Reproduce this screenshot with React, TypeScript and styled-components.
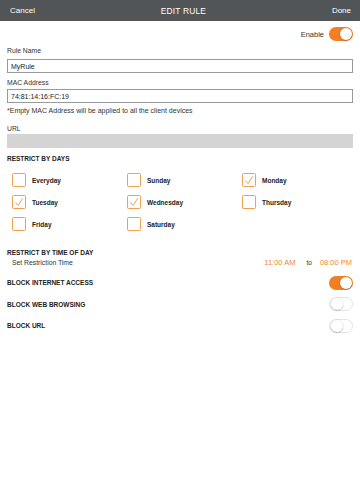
import React from 'react';
import styled, { createGlobalStyle } from 'styled-components';

const GlobalStyle = createGlobalStyle`
  body {
    margin: 0;
    background: #fff;
    font-family: "Liberation Sans", Arial, sans-serif;
    color: #222;
  }
`;

const Page = styled.div`
  width: 360px;
  height: 480px;
  background: #fff;
`;

const NavBar = styled.div`
  height: 21px;
  background: #525557;
  color: #fff;
  display: flex;
  align-items: center;
  justify-content: space-between;
  padding: 0 9px 0 10px;
  font-size: 8px;
`;

const NavTitle = styled.div`
  font-size: 8.4px;
  letter-spacing: 0.2px;
`;

const Body = styled.div`
  padding: 0 7px 0 7px;
`;

const EnableRow = styled.div`
  display: flex;
  justify-content: flex-end;
  align-items: center;
  gap: 5px;
  height: 24px;
  margin-top: 1px;
  font-size: 7.5px;
  color: #333;
`;

const Label = styled.div<{ $top?: number; $bottom?: number }>`
  font-size: 6.8px;
  line-height: 8px;
  color: #333;
  margin: ${(p) => p.$top ?? 5}px 0 ${(p) => p.$bottom ?? 4}px;
`;

const Input = styled.div<{ $disabled?: boolean }>`
  height: 14px;
  box-sizing: border-box;
  border: ${(p) => (p.$disabled ? 'none' : '1px solid #9a9a9a')};
  background: ${(p) => (p.$disabled ? '#d4d4d4' : '#fff')};
  font-size: 7px;
  color: #222;
  display: flex;
  align-items: center;
  padding-left: 3px;
`;

const Note = styled.div`
  font-size: 7px;
  line-height: 8px;
  color: #333;
  margin: 4px 0 10px;
`;

const SectionTitle = styled.div<{ $top?: number }>`
  font-size: 6.5px;
  line-height: 8px;
  font-weight: bold;
  color: #222;
  margin-top: ${(p) => p.$top ?? 7}px;
`;

const DayGrid = styled.div`
  display: grid;
  grid-template-columns: 115px 115px 115px;
  row-gap: 8px;
  padding: 10px 0 0 5px;
`;

const DayItem = styled.div`
  display: flex;
  align-items: center;
  gap: 6px;
  font-size: 6.5px;
  font-weight: bold;
  color: #222;
`;

const Box = styled.div`
  width: 14px;
  height: 14px;
  box-sizing: border-box;
  border: 1px solid #f0a050;
  border-radius: 1.5px;
  display: flex;
  align-items: center;
  justify-content: center;
`;

const TimeRow = styled.div`
  display: flex;
  align-items: center;
  font-size: 6.8px;
  line-height: 9px;
  color: #333;
  padding: 0 1px 0 5px;
  margin-top: 1px;
`;

const TimeLabel = styled.div`
  flex: 1;
`;

const TimeValue = styled.span`
  color: #f28a2e;
  font-size: 7.5px;
`;

const To = styled.span`
  font-size: 6.5px;
  margin: 0 8px 0 11px;
`;

const ToggleList = styled.div`
  margin-top: 5px;
`;

const ToggleRow = styled.div`
  display: flex;
  align-items: center;
  justify-content: space-between;
  height: 21.5px;
  font-size: 6.5px;
  font-weight: bold;
  color: #222;
`;

const Track = styled.div<{ $on: boolean }>`
  width: 24px;
  height: 14px;
  box-sizing: border-box;
  border-radius: 7px;
  background: ${(p) => (p.$on ? '#f27f24' : '#fff')};
  border: ${(p) => (p.$on ? 'none' : '1px solid #e3e3e3')};
  display: flex;
  align-items: center;
  justify-content: ${(p) => (p.$on ? 'flex-end' : 'flex-start')};
  padding: 1px;
`;

const Knob = styled.div`
  width: 12px;
  height: 12px;
  border-radius: 50%;
  background: #fff;
  box-shadow: 0 0.5px 1.5px rgba(0, 0, 0, 0.35);
`;

const Toggle = ({ on }: { on: boolean }) => (
  <Track $on={on}>
    <Knob />
  </Track>
);

const Check = () => (
  <svg width="10" height="10" viewBox="0 0 10 10">
    <path d="M1.5 5.5 L4 8.5 L8.8 1.2" fill="none" stroke="#f0943a" strokeWidth="0.9" />
  </svg>
);

const days: [string, boolean][] = [
  ['Everyday', false],
  ['Sunday', false],
  ['Monday', true],
  ['Tuesday', true],
  ['Wednesday', true],
  ['Thursday', false],
  ['Friday', false],
  ['Saturday', false],
];

export default function App() {
  return (
    <Page>
      <GlobalStyle />
      <NavBar>
        <span>Cancel</span>
        <NavTitle>EDIT RULE</NavTitle>
        <span>Done</span>
      </NavBar>
      <Body>
        <EnableRow>
          Enable
          <Toggle on />
        </EnableRow>
        <Label $top={1}>Rule Name</Label>
        <Input>MyRule</Input>
        <Label $top={6} $bottom={2}>MAC Address</Label>
        <Input>74:81:14:16:FC:19</Input>
        <Note>*Empty MAC Address will be applied to all the client devices</Note>
        <Label $top={0} $bottom={1}>URL</Label>
        <Input $disabled />
        <SectionTitle>RESTRICT BY DAYS</SectionTitle>
        <DayGrid>
          {days.map(([d, c]) => (
            <DayItem key={d}>
              <Box>{c && <Check />}</Box>
              {d}
            </DayItem>
          ))}
        </DayGrid>
        <SectionTitle $top={18}>RESTRICT BY TIME OF DAY</SectionTitle>
        <TimeRow>
          <TimeLabel>Set Restriction Time</TimeLabel>
          <TimeValue>11:00 AM</TimeValue>
          <To>to</To>
          <TimeValue>08:00 PM</TimeValue>
        </TimeRow>
        <ToggleList>
          <ToggleRow>
            BLOCK INTERNET ACCESS
            <Toggle on />
          </ToggleRow>
          <ToggleRow>
            BLOCK WEB BROWSING
            <Toggle on={false} />
          </ToggleRow>
          <ToggleRow>
            BLOCK URL
            <Toggle on={false} />
          </ToggleRow>
        </ToggleList>
      </Body>
    </Page>
  );
}
